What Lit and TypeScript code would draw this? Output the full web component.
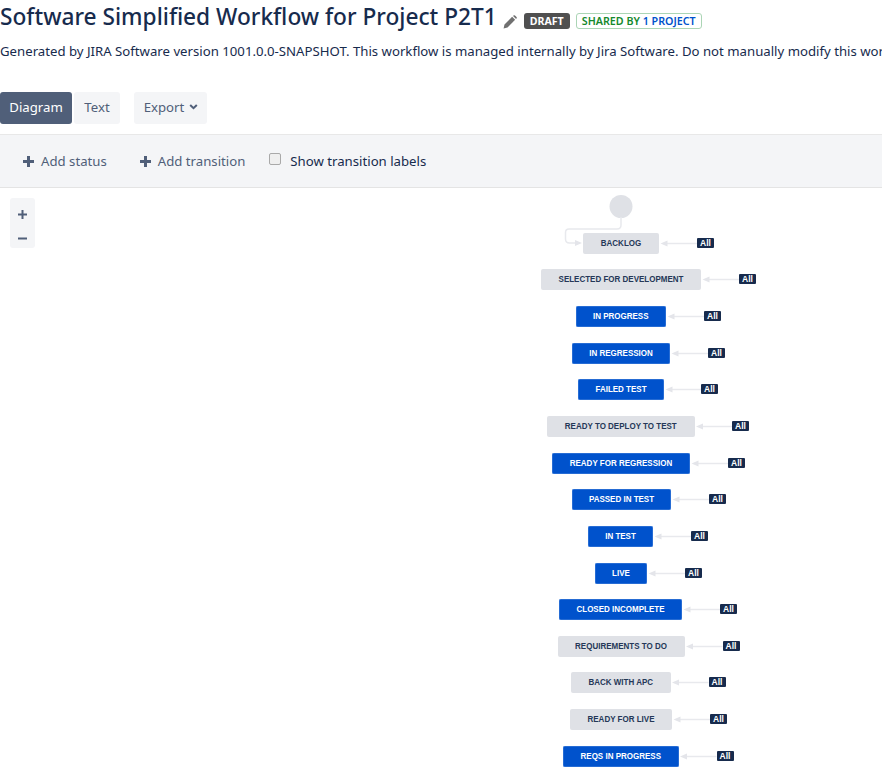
import { LitElement, html, css, svg } from "lit";
import { customElement } from "lit/decorators.js";

type N = [string, number, number, number, boolean];
// label, left, right, badge left, in-progress colour
const NODES: N[] = [
  ["BACKLOG", 583, 659, 697, false],
  ["SELECTED FOR DEVELOPMENT", 541, 701, 739, false],
  ["IN PROGRESS", 575.5, 666, 704, true],
  ["IN REGRESSION", 572, 670, 708, true],
  ["FAILED TEST", 578, 664, 701, true],
  ["READY TO DEPLOY TO TEST", 547, 694.5, 732, false],
  ["READY FOR REGRESSION", 552, 690, 728, true],
  ["PASSED IN TEST", 572, 671, 709, true],
  ["IN TEST", 588, 653, 691, true],
  ["LIVE", 595, 647, 685, true],
  ["CLOSED INCOMPLETE", 559, 682, 720, true],
  ["REQUIREMENTS TO DO", 557.5, 684.5, 722.5, false],
  ["BACK WITH APC", 571, 670.5, 708.5, false],
  ["READY FOR LIVE", 570, 672, 710, false],
  ["REQS IN PROGRESS", 563, 678.5, 716.5, true],
];
const STEP = 36.65;
const FIRST_TOP = 45; // relative to canvas top (188)

@customElement("app-root")
export class AppRoot extends LitElement {
  static styles = css`
    :host {
      display: block;
      width: 882px;
      height: 774px;
      overflow: hidden;
      background: #fff;
      font-family: "Noto Sans", "Open Sans", sans-serif;
      color: #172b4d;
    }
    .head { display: flex; align-items: center; height: 34px; white-space: nowrap; }
    h1 { margin: 0; font-size: 22.7px; font-weight: 500; line-height: 34px; color: #172b4d; }
    .pencil { margin: 10px 0 0 6px; width: 14px; height: 14px; flex: none; }
    .draft {
      margin: 8px 0 0 7px; background: #505050; color: #fff; font-size: 10.6px; font-weight: 700;
      line-height: 16px; height: 16px; width: 46px; text-align: center; border-radius: 3px;
    }
    .shared {
      margin: 8px 0 0 6px; border: 1px solid #abd5b5; border-radius: 3px; font-size: 10.7px; font-weight: 600;
      line-height: 14px; height: 14px; width: 124px; text-align: center; color: #14892c; white-space: nowrap;
    }
    .shared b { font-weight: 600; color: #0052cc; }
    .desc { margin: 7px 0 0; font-size: 13.2px; line-height: 20px; white-space: nowrap; color: #172b4d; height: 20px; }
    .tabs { display: flex; margin-top: 31px; height: 32px; align-items: center; }
    .btn {
      height: 32px; box-sizing: border-box; padding-bottom: 2px; display: flex; align-items: center; justify-content: center;
      font-size: 13.2px; background: #f4f5f7; color: #505f79; border-radius: 3px;
    }
    .b-diagram { width: 72px; background: #505f79; color: #fff; }
    .b-text { width: 46px; margin-left: 2px; }
    .b-export { width: 73px; margin-left: 14px; gap: 5px; padding-left: 1px; }
    .b-export svg { width: 9px; height: 6px; }
    .toolbar {
      box-sizing: border-box; margin-top: 10px; height: 54px; background: #f4f5f7;
      border-top: 1px solid #e8e8e8; border-bottom: 1px solid #e4e4e4;
      display: flex; align-items: center; padding-left: 23px; font-size: 13.2px; color: #505f79;
    }
    .tool { display: flex; align-items: center; gap: 7px; }
    .tool svg { width: 11px; height: 11px; flex: none; }
    .tool.t2 { margin-left: 33px; }
    .check { margin-left: 24px; display: flex; align-items: center; gap: 9px; color: #172b4d; }
    .box { width: 10px; height: 10px; border: 1px solid #a9a9a9; border-radius: 2px; background: #efefef; margin-top: -4px; }
    .canvas { position: relative; height: 586px; }
    .zoom {
      position: absolute; left: 10px; top: 10px; width: 25px; height: 50px; box-sizing: border-box; padding-top: 11.5px;
      background: #f4f5f7; border-radius: 3px;
      display: flex; flex-direction: column; align-items: center; gap: 15px;
    }
    .zoom svg { width: 9px; height: 9px; }
    .lines { position: absolute; left: 0; top: 0; }
    .node {
      position: absolute; height: 21px; box-sizing: border-box; border-radius: 2px; background: #dfe1e6; color: #253858;
      font-family: "Liberation Sans", Arial, sans-serif; font-weight: 700; font-size: 8px;
      display: flex; align-items: center; justify-content: center; white-space: nowrap;
    }
    .node span { display: block; transform: scaleY(1.12); }
    .node.blue { background: #0052cc; color: #fff; box-shadow: 0 0 0 0.5px #4c86dc inset; }
    .all {
      position: absolute; width: 17px; height: 10px; background: #172b4d; color: #fff; border-radius: 1px;
      font-family: "Liberation Sans", Arial, sans-serif; font-weight: 700; font-size: 8.5px; line-height: 10px; text-align: center;
    }
  `;

  private top(i: number) {
    return FIRST_TOP + Math.round(i * STEP - 0.3);
  }

  render() {
    return html`
      <div class="head">
        <h1>Software Simplified Workflow for Project P2T1</h1>
        <svg class="pencil" viewBox="0 0 15 15"><path d="M0.6 14.4 L1.6 10.2 L9.8 2 L13 5.2 L4.8 13.4 Z" fill="#707070"/><path d="M10.8 1 L11.6 0.4 Q12.2 0 12.8 0.5 L14.5 2.2 Q15 2.8 14.6 3.4 L14 4.2 Z" fill="#707070"/></svg>
        <span class="draft">DRAFT</span>
        <span class="shared">SHARED BY <b>1 PROJECT</b></span>
      </div>
      <p class="desc">Generated by JIRA Software version 1001.0.0-SNAPSHOT. This workflow is managed internally by Jira Software. Do not manually modify this workflow.</p>
      <div class="tabs">
        <div class="btn b-diagram">Diagram</div>
        <div class="btn b-text">Text</div>
        <div class="btn b-export">Export
          <svg viewBox="0 0 9 6"><path d="M1.2 1 L4.5 4.2 L7.8 1" fill="none" stroke="#505f79" stroke-width="2"/></svg>
        </div>
      </div>
      <div class="toolbar">
        <div class="tool"><svg viewBox="0 0 11 11"><path d="M4 0h3v4h4v3H7v4H4V7H0V4h4z" fill="#505f79"/></svg>Add status</div>
        <div class="tool t2"><svg viewBox="0 0 11 11"><path d="M4 0h3v4h4v3H7v4H4V7H0V4h4z" fill="#505f79"/></svg>Add transition</div>
        <div class="check"><span class="box"></span>Show transition labels</div>
      </div>
      <div class="canvas">
        <div class="zoom">
          <svg viewBox="0 0 9 9"><path d="M3.5 0h2v3.5H9v2H5.5V9h-2V5.5H0v-2h3.5z" fill="#505f79"/></svg>
          <svg viewBox="0 0 9 9"><path d="M0 3.5h9v2H0z" fill="#505f79"/></svg>
        </div>
        <svg class="lines" width="882" height="586">
          <circle cx="621" cy="18.5" r="11.5" fill="#dfe1e6"></circle>
          <path d="M621 29 V37 Q621 41 617 41 H569 Q565.5 41 565.5 44.5 V51 Q565.5 55 569.5 55 H576" fill="none" stroke="#e8e9ed" stroke-width="1.5"></path>
          <path d="M575 52 L582 55 L575 58 Z" fill="#e4e5ea"></path>
          ${NODES.map((n, i) => {
            const y = this.top(i) + 10.5;
            return svg`
              <path d=${`M${n[3]} ${y} H${n[2] + 8}`} stroke="#e8e9ed" stroke-width="1.5"></path>
              <path d=${`M${n[2] + 1.5} ${y} L${n[2] + 8.5} ${y - 3} V${y + 3} Z`} fill="#e4e5ea"></path>`;
          })}
        </svg>
        ${NODES.map((n, i) => html`
          <div class="node ${n[4] ? "blue" : ""}" style="left:${n[1]}px;width:${n[2] - n[1]}px;top:${this.top(i)}px"><span>${n[0]}</span></div>
          <div class="all" style="left:${n[3]}px;top:${this.top(i) + 5}px">All</div>
        `)}
      </div>
    `;
  }
}
